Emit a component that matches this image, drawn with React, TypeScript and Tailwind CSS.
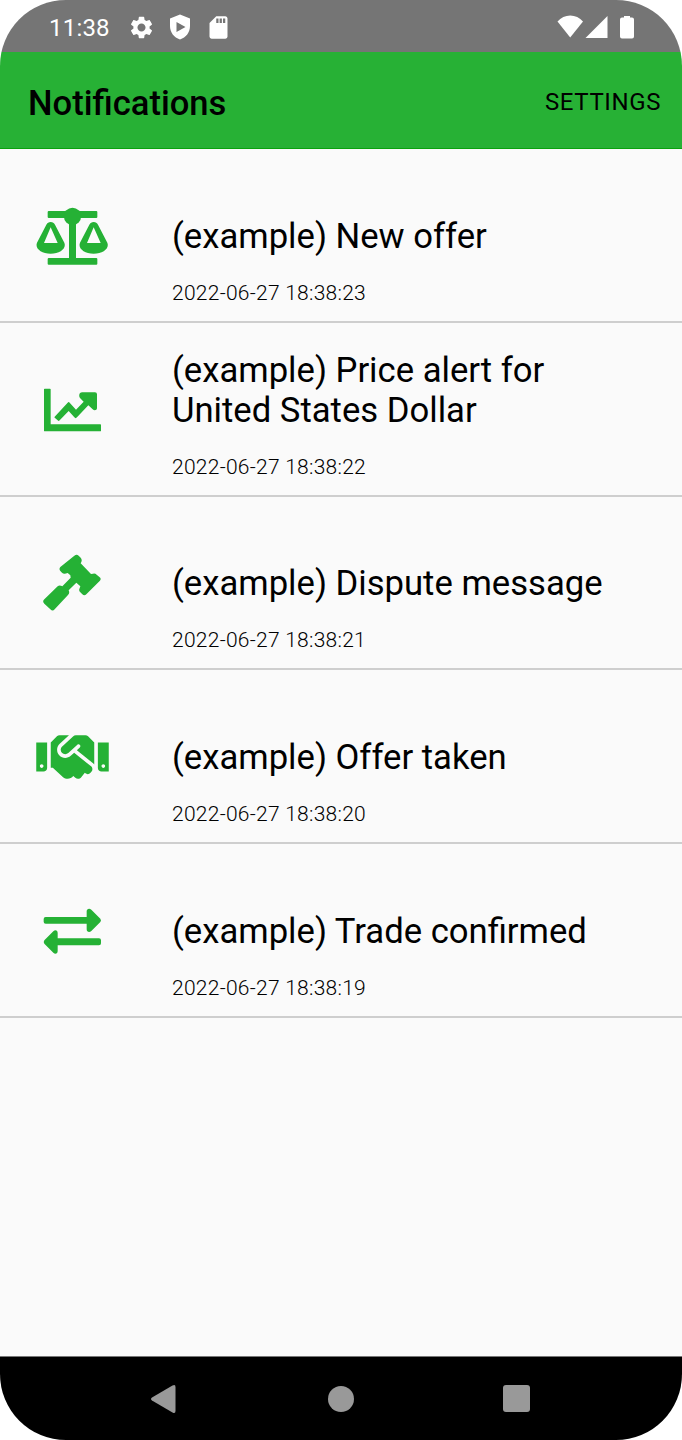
import type { ReactNode } from 'react';
import { FaHandshake } from 'react-icons/fa';
import { MdSdCard, MdSettings } from 'react-icons/md';

interface Notification {
  title: string;
  date: string;
  icon: ReactNode;
}

const iconClass = 'h-[58px] w-[73px] fill-[#25b135]';

const ScaleIcon = () => (
  <svg viewBox="0 0 219 174" className={iconClass}>
    <rect x="35" y="12" width="149" height="21" rx="3" />
    <rect x="35" y="153" width="149" height="20" rx="3" />
    <rect x="99" y="20" width="21" height="140" />
    <circle cx="109.5" cy="28" r="26" />
    <path
      fillRule="evenodd"
      d="M44 45c6 0 10 3 13 8l28 54c7 18-13 33-41 33S-4 125 3 107l28-54c3-5 7-8 13-8zm0 16L24 108h41z"
    />
    <path
      fillRule="evenodd"
      d="M173 45c6 0 10 3 13 8l28 54c7 18-13 33-41 33s-48-15-41-33l28-54c3-5 7-8 13-8zm0 16l-20 47h41z"
    />
  </svg>
);

const ChartIcon = () => (
  <svg viewBox="0 0 219 174" className={iconClass}>
    <path d="M26 23h16q2 0 2 2v105h149q2 0 2 2v17q0 2-2 2H26q-2 0-2-2V25q0-2 2-2z" />
    <path d="M56 107l39-42q3-4 6 0l19 21 23-24-11-11c-5-8-1-17 6-17h39q6 0 6 6v41c0 7-8 9-13 4l-13-12-34 36q-4 5-8 0L98 90l-27 28q-3 4-6 0l-8-7q-3-2-1-4z" />
  </svg>
);

const GavelIcon = () => (
  <svg viewBox="0 0 219 174" className={iconClass}>
    <path d="M115 5q7-6 13 0l6 6q5 6 2 13l-2 4 31 32 6-1q6-2 11 3l9 8q6 5 0 11l-40 40q-6 6-12 0l-6-6q-5-5-3-10l3-8-12-11-23 23 1 3q2 6-3 11l-40 43q-6 7-13 0l-18-17q-7-7 0-13l40-39q4-4 10-2l4 2 25-26-1-7-8-7-8 2q-5 1-9-3l-5-5q-5-6 0-12z" />
  </svg>
);

const ExchangeIcon = () => (
  <svg viewBox="0 0 219 174" className={iconClass}>
    <path d="M29 45h123V28c0-9 9-10 14-5l27 27q4 5 0 10l-27 27c-5 5-14 4-14-5V65H29q-6 0-6-6v-8q0-6 6-6z" />
    <path d="M189 109H65V93c0-9-8-10-13-5l-27 27q-4 5 0 10l27 27c5 5 13 4 13-5v-17h124q6 0 6-6v-9q0-6-6-6z" />
  </svg>
);

const notifications: Notification[] = [
  { title: '(example) New offer', date: '2022-06-27 18:38:23', icon: <ScaleIcon /> },
  { title: '(example) Price alert for United States Dollar', date: '2022-06-27 18:38:22', icon: <ChartIcon /> },
  { title: '(example) Dispute message', date: '2022-06-27 18:38:21', icon: <GavelIcon /> },
  { title: '(example) Offer taken', date: '2022-06-27 18:38:20', icon: <FaHandshake className={iconClass} /> },
  { title: '(example) Trade confirmed', date: '2022-06-27 18:38:19', icon: <ExchangeIcon /> },
];

function StatusBar() {
  return (
    <div className="flex h-[52px] items-center bg-[#757575] pt-0.5 pr-[47px] pl-[49px] text-white">
      <span className="mt-px text-[24px] tracking-[0.2px]">11:38</span>
      <MdSettings className="ml-[18px] size-[27px]" />
      <svg viewBox="0 0 22 26" className="ml-[14px] h-[26px] w-[22px] fill-white">
        <path fillRule="evenodd" d="M11 0.5l10 4V12c0 6.500-4 11.500-10 13.500C5 23.500 1 18.500 1 12V4.500zM7.500 8v10l9-5z" />
      </svg>
      <MdSdCard className="ml-[14px] size-[27px]" />
      <svg viewBox="0 0 78 26" className="ml-auto h-[26px] w-[78px] fill-white">
        <path d="M0.500 7.500C7-0.500 19.500-0.500 26 7.500L13.200 23.500z" />
        <path d="M50.500 2v22h-22z" />
        <path d="M67 3.500V2h6v1.500h2q2 0 2 2v17q0 2-2 2H65q-2 0-2-2v-17q0-2 2-2z" />
      </svg>
    </div>
  );
}

function NotificationRow({ title, date, icon }: Notification) {
  return (
    <li className="flex h-[173.650px] items-center border-b-2 border-[#cecece]">
      <div className="flex w-[172px] shrink-0 pt-[1.500px] pl-9">{icon}</div>
      <div className="flex h-full w-[450px] flex-col justify-end pb-[14px]">
        <h2 className="text-[34.650px] leading-[40px]">{title}</h2>
        <p className="mt-[24px] text-[21px] leading-[27px] font-light tracking-[0.26px]">{date}</p>
      </div>
    </li>
  );
}

export default function App() {
  return (
    <div className="h-[1440px] w-[682px] bg-white">
      <div className="flex h-full flex-col overflow-hidden rounded-[66px] bg-[#fafafa] font-['Roboto',sans-serif] text-black">
        <StatusBar />

        {/* Header */}
        <header className="flex h-[97px] items-center justify-between border-b border-[#09a20d] bg-[#27b135] pr-[21px] pl-7">
          <h1 className="mt-2 text-[34.600px] font-medium">Notifications</h1>
          <button className="mt-1 text-[24px] tracking-[0.6px]">SETTINGS</button>
        </header>

        {/* List */}
        <ul className="flex-1 pt-[0.500px]">
          {notifications.map((notification) => (
            <NotificationRow key={notification.date} {...notification} />
          ))}
        </ul>

        {/* Navigation bar */}
        <nav className="flex h-[84px] items-center border-t border-[#777777] bg-black pl-[150px]">
          <svg viewBox="0 0 26 30" className="h-[30px] w-[26px] fill-[#999999]">
            <path d="M2 13.500L22.500 1.500Q25.500 0 25.500 3v24q0 3-3 1.500L2 16.500q-2-1.500 0-3z" />
          </svg>
          <div className="ml-[152px] size-[26px] rounded-full bg-[#999999]" />
          <div className="ml-[149px] size-[27px] rounded-[3px] bg-[#999999]" />
        </nav>
      </div>
    </div>
  );
}
